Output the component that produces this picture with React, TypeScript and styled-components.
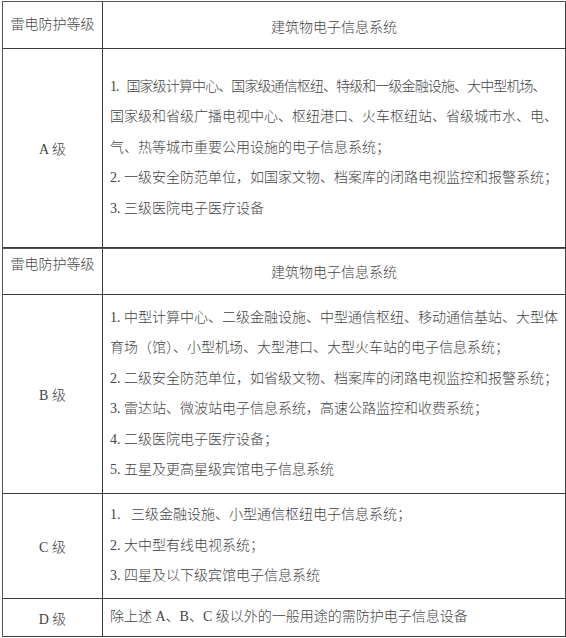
import styled, { createGlobalStyle } from "styled-components";

const GlobalStyle = createGlobalStyle`
  html, body {
    margin: 0;
    padding: 0;
    background: #ffffff;
  }
  body {
    font-family: "Liberation Serif", "Noto Sans CJK SC", serif;
    color: #444444;
  }
`;

type Item = { lines: string[]; tight?: boolean };

type Level = {
  name: string;
  height: number;
  items: Item[];
};

const groups: Level[][] = [
  [
    {
      name: "A 级",
      height: 199,
      items: [
        {
          tight: true,
          lines: [
            "1.\u00a0\u00a0\u00a0国家级计算中心、国家级通信枢纽、特级和一级金融设施、大中型机场、",
            "国家级和省级广播电视中心、枢纽港口、火车枢纽站、省级城市水、电、",
            "气、热等城市重要公用设施的电子信息系统；",
          ],
        },
        { lines: ["2. 一级安全防范单位，如国家文物、档案库的闭路电视监控和报警系统；"] },
        { lines: ["3. 三级医院电子医疗设备"] },
      ],
    },
  ],
  [
    {
      name: "B 级",
      height: 199,
      items: [
        {
          lines: [
            "1. 中型计算中心、二级金融设施、中型通信枢纽、移动通信基站、大型体",
            "育场（馆）、小型机场、大型港口、大型火车站的电子信息系统；",
          ],
        },
        { lines: ["2. 二级安全防范单位，如省级文物、档案库的闭路电视监控和报警系统；"] },
        { lines: ["3. 雷达站、微波站电子信息系统，高速公路监控和收费系统；"] },
        { lines: ["4. 二级医院电子医疗设备；"] },
        { lines: ["5. 五星及更高星级宾馆电子信息系统"] },
      ],
    },
    {
      name: "C 级",
      height: 105,
      items: [
        { lines: ["1.\u00a0\u00a0\u00a0三级金融设施、小型通信枢纽电子信息系统；"] },
        { lines: ["2. 大中型有线电视系统；"] },
        { lines: ["3. 四星及以下级宾馆电子信息系统"] },
      ],
    },
    {
      name: "D 级",
      height: 38,
      items: [{ lines: ["除上述 A、B、C 级以外的一般用途的需防护电子信息设备"] }],
    },
  ],
];

export default function App() {
  return (
    <>
      <GlobalStyle />
      <Page>
        {groups.map((levels, i) => (
          <Sheet key={i}>
            <HeadCell $height={i === 0 ? 47 : 46} $top={i === 0 ? 0 : 2}>
              雷电防护等级
            </HeadCell>
            <HeadCell $height={i === 0 ? 47 : 46} $nudge={i === 0 ? 5 : 2}>
              建筑物电子信息系统
            </HeadCell>
            {levels.map((lv) => (
              <Row key={lv.name} $height={lv.height}>
                <LevelCell>{lv.name}</LevelCell>
                <SystemCell>
                  {lv.items.map((item, k) => (
                    <div key={k}>
                      {item.lines.map((l, n) => (
                        <Line key={n} $tight={item.tight && n === 0}>
                          {l}
                        </Line>
                      ))}
                    </div>
                  ))}
                </SystemCell>
              </Row>
            ))}
          </Sheet>
        ))}
      </Page>
    </>
  );
}

const Page = styled.div`
  padding: 1px 0 0 2px;
  width: 564px;
`;

const Sheet = styled.div`
  display: grid;
  grid-template-columns: 100px 463px;
  border-top: 1px solid #555555;
  border-left: 1px solid #555555;
  font-size: 14px;
`;

const Row = styled.div<{ $height: number }>`
  display: contents;

  & > div {
    height: ${(p) => p.$height}px;
  }
`;

const Cell = styled.div`
  box-sizing: border-box;
  border-right: 1px solid #3c3c3c;
  border-bottom: 1px solid #3c3c3c;
  display: flex;
  flex-direction: column;
  justify-content: center;
`;

const HeadCell = styled(Cell)<{
  $height: number;
  $top?: number;
  $nudge?: number;
}>`
  height: ${(p) => p.$height}px;
  align-items: center;
  line-height: 28px;
  justify-content: ${(p) => (p.$top ? "flex-start" : "center")};
  padding-top: ${(p) => p.$top || p.$nudge || 0}px;
  font-weight: 300;
`;

const LevelCell = styled(Cell)`
  align-items: center;
  font-weight: 300;
`;

const SystemCell = styled(Cell)`
  padding-left: 7px;
  line-height: 30.5px;
  font-weight: 300;
  white-space: nowrap;
`;

const Line = styled.div<{ $tight?: boolean }>`
  letter-spacing: ${(p) => (p.$tight ? "-0.9px" : "0")};
`;
